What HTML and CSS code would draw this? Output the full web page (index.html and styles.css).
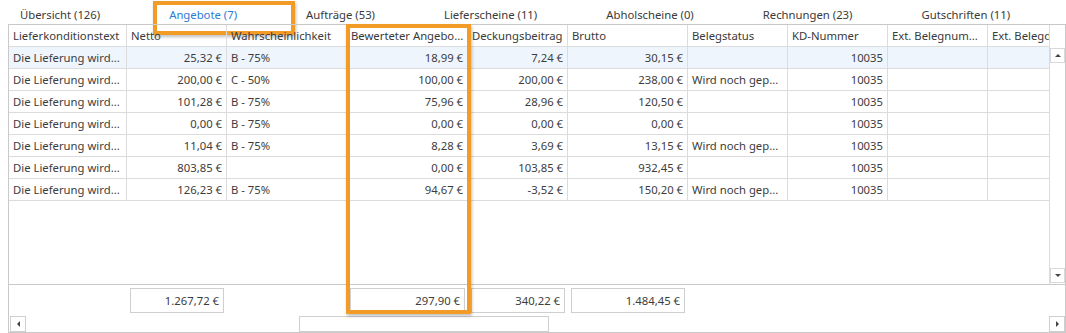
FILE: index.html
```html
<!DOCTYPE html>
<html lang="de">
<head>
<meta charset="utf-8">
<title>Angebote</title>
<link rel="stylesheet" href="styles.css">
</head>
<body>
<nav class="tabs">
  <span class="tab">Übersicht (126)</span>
  <span class="tab active">Angebote (7)</span>
  <span class="tab">Aufträge (53)</span>
  <span class="tab">Lieferscheine (11)</span>
  <span class="tab">Abholscheine (0)</span>
  <span class="tab">Rechnungen (23)</span>
  <span class="tab">Gutschriften (11)</span>
</nav>
<div class="grid">
  <div class="body">
    <div class="cols">
      <div class="row head">
        <div class="cell">Lieferkonditionstext</div>
        <div class="cell">Netto</div>
        <div class="cell">Wahrscheinlichkeit</div>
        <div class="cell">Bewerteter Angebo...</div>
        <div class="cell">Deckungsbeitrag</div>
        <div class="cell">Brutto</div>
        <div class="cell">Belegstatus</div>
        <div class="cell">KD-Nummer</div>
        <div class="cell">Ext. Belegnum...</div>
        <div class="cell">Ext. Belegdatum</div>
      </div>
      <div class="row selected">
        <div class="cell">Die Lieferung wird...</div>
        <div class="cell num">25,32 €</div>
        <div class="cell">B - 75%</div>
        <div class="cell num">18,99 €</div>
        <div class="cell num">7,24 €</div>
        <div class="cell num">30,15 €</div>
        <div class="cell"></div>
        <div class="cell num">10035</div>
        <div class="cell"></div>
        <div class="cell"></div>
      </div>
      <div class="row">
        <div class="cell">Die Lieferung wird...</div>
        <div class="cell num">200,00 €</div>
        <div class="cell">C - 50%</div>
        <div class="cell num">100,00 €</div>
        <div class="cell num">200,00 €</div>
        <div class="cell num">238,00 €</div>
        <div class="cell">Wird noch gep...</div>
        <div class="cell num">10035</div>
        <div class="cell"></div>
        <div class="cell"></div>
      </div>
      <div class="row">
        <div class="cell">Die Lieferung wird...</div>
        <div class="cell num">101,28 €</div>
        <div class="cell">B - 75%</div>
        <div class="cell num">75,96 €</div>
        <div class="cell num">28,96 €</div>
        <div class="cell num">120,50 €</div>
        <div class="cell"></div>
        <div class="cell num">10035</div>
        <div class="cell"></div>
        <div class="cell"></div>
      </div>
      <div class="row">
        <div class="cell">Die Lieferung wird...</div>
        <div class="cell num">0,00 €</div>
        <div class="cell">B - 75%</div>
        <div class="cell num">0,00 €</div>
        <div class="cell num">0,00 €</div>
        <div class="cell num">0,00 €</div>
        <div class="cell"></div>
        <div class="cell num">10035</div>
        <div class="cell"></div>
        <div class="cell"></div>
      </div>
      <div class="row">
        <div class="cell">Die Lieferung wird...</div>
        <div class="cell num">11,04 €</div>
        <div class="cell">B - 75%</div>
        <div class="cell num">8,28 €</div>
        <div class="cell num">3,69 €</div>
        <div class="cell num">13,15 €</div>
        <div class="cell">Wird noch gep...</div>
        <div class="cell num">10035</div>
        <div class="cell"></div>
        <div class="cell"></div>
      </div>
      <div class="row">
        <div class="cell">Die Lieferung wird...</div>
        <div class="cell num">803,85 €</div>
        <div class="cell"></div>
        <div class="cell num">0,00 €</div>
        <div class="cell num">103,85 €</div>
        <div class="cell num">932,45 €</div>
        <div class="cell"></div>
        <div class="cell num">10035</div>
        <div class="cell"></div>
        <div class="cell"></div>
      </div>
      <div class="row">
        <div class="cell">Die Lieferung wird...</div>
        <div class="cell num">126,23 €</div>
        <div class="cell">B - 75%</div>
        <div class="cell num">94,67 €</div>
        <div class="cell num">-3,52 €</div>
        <div class="cell num">150,20 €</div>
        <div class="cell">Wird noch gep...</div>
        <div class="cell num">10035</div>
        <div class="cell"></div>
        <div class="cell"></div>
      </div>
    </div>
    <div class="vscroll">
      <div class="sbtn"><span class="tri up"></span></div>
      <div class="sbtn"><span class="tri down"></span></div>
    </div>
  </div>
  <div class="footer">
    <div class="fcell"></div>
    <div class="fcell"><div class="sum">1.267,72 €</div></div>
    <div class="fcell"></div>
    <div class="fcell"><div class="sum">297,90 €</div></div>
    <div class="fcell"><div class="sum">340,22 €</div></div>
    <div class="fcell"><div class="sum">1.484,45 €</div></div>
  </div>
  <div class="hscroll">
    <div class="sbtn"><span class="tri left"></span></div>
    <div class="thumb"></div>
    <div class="sbtn"><span class="tri right"></span></div>
  </div>
  <div class="mark-col"></div>
</div>
</body>
</html>
```

FILE: styles.css
```css
* { box-sizing: border-box; }

body {
  margin: 0;
  background: #ffffff;
  font-family: "Noto Sans", "Open Sans", sans-serif;
  font-size: 11.3px;
  color: #3a3a3a;
}

.tabs {
  display: flex;
  align-items: flex-start;
  gap: 69px;
  height: 24px;
  padding: 7px 0 0 20px;
}

.tab {
  position: relative;
  white-space: nowrap;
  line-height: 16px;
  color: #3a3a3a;
}

.tab.active { color: #2b7bd3; }

.tab.active::after {
  content: "";
  position: absolute;
  left: -16px;
  right: -58px;
  top: -6px;
  height: 26px;
  border: 4px solid #f29b26;
  box-shadow: 1px 2px 3px rgba(0, 0, 0, 0.25);
}

.grid {
  position: relative;
  margin-left: 8px;
  width: 1058px;
  border: 1px solid #c9c9c9;
}

.body {
  display: flex;
  height: 259px;
}

.cols {
  width: 1040px;
  overflow: hidden;
}

.row {
  display: grid;
  grid-template-columns: 118px 100px 120px 121px 100px 120px 100px 100px 100px 100px;
  height: 22px;
}

.row.selected { background: #eef5fd; }

.cell {
  border-right: 1px solid #dcdcdc;
  border-bottom: 1px solid #dcdcdc;
  padding: 0 4px 0 4px;
  line-height: 21px;
  white-space: nowrap;
  overflow: hidden;
  color: #3d3d3d;
}

.head .cell { padding-left: 4px; color: #3a3a3a; }

.cell.num { text-align: right; }

.vscroll {
  width: 16px;
  border-left: 1px solid #dcdcdc;
  display: flex;
  flex-direction: column;
  justify-content: space-between;
  padding: 23px 0 1px 0;
}

.sbtn {
  width: 15px;
  height: 15px;
  border: 1px solid #d9d9d9;
  background: #ffffff;
  display: flex;
  align-items: center;
  justify-content: center;
  flex: none;
}

.tri { width: 0; height: 0; display: block; }
.tri.up { border-left: 3px solid transparent; border-right: 3px solid transparent; border-bottom: 3px solid #444; }
.tri.down { border-left: 3px solid transparent; border-right: 3px solid transparent; border-top: 3px solid #444; }
.tri.left { border-top: 3px solid transparent; border-bottom: 3px solid transparent; border-right: 3px solid #444; }
.tri.right { border-top: 3px solid transparent; border-bottom: 3px solid transparent; border-left: 3px solid #444; }

.footer {
  display: grid;
  grid-template-columns: 118px 100px 120px 121px 100px 120px;
  height: 32px;
  border-top: 1px solid #c9c9c9;
  padding-top: 3px;
}

.fcell { padding: 0 3px; }

.sum {
  height: 25px;
  border: 1px solid #cfcfcf;
  text-align: right;
  padding-right: 4px;
  line-height: 23px;
  color: #3d3d3d;
}

.hscroll {
  display: flex;
  align-items: center;
  height: 16px;
  padding-left: 1px;
}

.hscroll .sbtn { width: 16px; height: 16px; border-color: #cfcfcf; }

.thumb {
  width: 250px;
  height: 16px;
  margin-left: 273px;
  margin-right: auto;
  border: 1px solid #cfcfcf;
}

.mark-col {
  position: absolute;
  left: 337px;
  top: -1px;
  width: 125px;
  height: 290px;
  border: 4px solid #f29b26;
  box-shadow: 1px 2px 3px rgba(0, 0, 0, 0.25);
  pointer-events: none;
}
```
